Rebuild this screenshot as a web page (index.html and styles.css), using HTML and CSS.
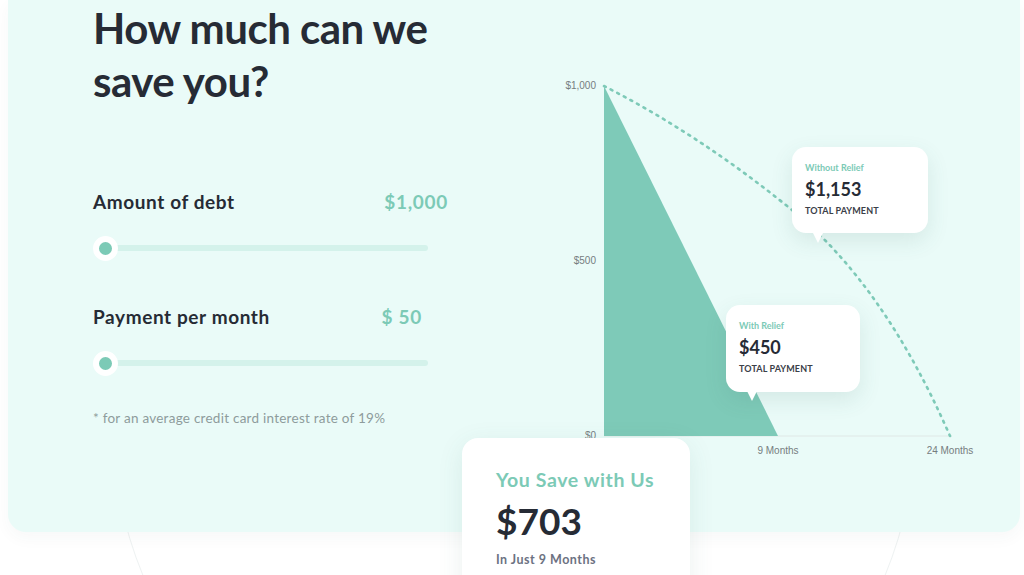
FILE: index.html
```html
<!DOCTYPE html>
<html lang="en">
<head>
  <meta charset="UTF-8">
  <meta name="viewport" content="width=device-width, initial-scale=1.0">
  <title>Savings Calculator</title>
  <link rel="stylesheet" href="styles.css">
</head>
<body>
  <div class="ring"></div>

  <section class="panel">
    <!-- Calculator -->
    <div class="calc">
      <h1>How much can we<br>save you?</h1>

      <div class="field first">
        <div class="field-row">
          <span class="field-label">Amount of debt</span>
          <span class="field-value">$1,000</span>
        </div>
        <div class="slider">
          <span class="knob"></span>
          <span class="track"></span>
        </div>
      </div>

      <div class="field">
        <div class="field-row">
          <span class="field-label">Payment per month</span>
          <span class="field-value short">$ 50</span>
        </div>
        <div class="slider">
          <span class="knob"></span>
          <span class="track"></span>
        </div>
      </div>

      <p class="note">* for an average credit card interest rate of 19%</p>
    </div>

    <!-- Chart -->
    <div class="chart">
      <svg width="440" height="392" viewBox="0 0 440 392">
        <line x1="56" y1="364" x2="404" y2="364" stroke="#dfe8e6" stroke-width="1"/>
        <polygon points="56,14 56,364 230,364" fill="#7ecab8"/>
        <path d="M56,14 Q152,63 244,138 T402,364" fill="none" stroke="#7ecab8" stroke-width="2.6" stroke-dasharray="2 5.5" stroke-linecap="round"/>
        <g class="axis-text">
          <text x="48" y="17" text-anchor="end">$1,000</text>
          <text x="48" y="192" text-anchor="end">$500</text>
          <text x="48" y="367" text-anchor="end">$0</text>
          <text x="230" y="382" text-anchor="middle">9 Months</text>
          <text x="402" y="382" text-anchor="middle">24 Months</text>
        </g>
      </svg>

      <div class="bubble without">
        <div class="bubble-label">Without Relief</div>
        <div class="bubble-amount">$1,153</div>
        <div class="bubble-sub">TOTAL PAYMENT</div>
      </div>

      <div class="bubble with">
        <div class="bubble-label">With Relief</div>
        <div class="bubble-amount">$450</div>
        <div class="bubble-sub">TOTAL PAYMENT</div>
      </div>
    </div>

    <div class="savings">
      <div class="savings-title">You Save with Us</div>
      <div class="savings-amount">$703</div>
      <div class="savings-sub">In Just 9 Months</div>
    </div>
  </section>
</body>
</html>
```

FILE: styles.css
```css
body {
  margin: 0;
  background-color: #fff;
  font-family: Lato, "Noto Sans", sans-serif;
  color: #262b35;
  overflow: hidden;
  position: relative;
  height: 575px;
}

/* big faint circle peeking out under the panel */
.ring {
  position: absolute;
  left: 112px;
  top: 20px;
  width: 802px;
  height: 802px;
  border: 1px solid #eef2f2;
  border-radius: 50%;
}

.panel {
  position: relative;
  display: flex;
  height: 532px;
  margin: 0 4px 0 8px;
  background-color: #eafbf8;
  border-radius: 0 0 18px 18px;
  box-shadow: 0 6px 16px rgba(40, 80, 70, 0.04);
}

.calc {
  width: 355px;
  padding: 2px 0 0 85px;
}

h1 {
  margin: 0;
  font-size: 42px;
  line-height: 53px;
  font-weight: 700;
  letter-spacing: -0.5px;
}

.field {
  width: 355px;
  margin-top: 44px;
}

.field.first {
  margin-top: 81px;
}

.field-row {
  display: flex;
  justify-content: space-between;
  align-items: center;
  height: 24px;
}

.field-label {
  font-size: 19px;
  font-weight: 700;
  letter-spacing: 0.6px;
}

.field-value {
  font-size: 19px;
  font-weight: 700;
  letter-spacing: 0.7px;
  color: #7ccab6;
}

.field-value.short {
  margin-right: 26px;
}

.slider {
  display: flex;
  align-items: center;
  width: 335px;
  height: 24px;
  margin-top: 23px;
}

.knob {
  flex: none;
  width: 13px;
  height: 13px;
  border: 6px solid #fff;
  border-radius: 50%;
  background-color: #7ccab6;
  position: relative;
  z-index: 1;
}

.track {
  flex: 1;
  height: 6px;
  margin-left: -6px;
  border-radius: 3px;
  background-color: #d4f2eb;
}

.note {
  margin: 34px 0 0;
  font-size: 13.5px;
  line-height: 18px;
  letter-spacing: 0.25px;
  color: #8e9c9c;
}

.chart {
  position: relative;
  margin: 72px 0 0 100px;
  width: 440px;
  height: 392px;
}

.chart svg {
  display: block;
}

.axis-text text {
  font-family: "Liberation Sans", Arial, sans-serif;
  font-size: 10px;
  fill: #767d80;
}

.bubble {
  position: absolute;
  box-sizing: border-box;
  width: 136px;
  height: 86px;
  padding: 14px 13px;
  background-color: #fff;
  border-radius: 14px;
  box-shadow: 0 8px 22px rgba(60, 110, 100, 0.12);
}

/* little tail under the bubble */
.bubble::after {
  content: '';
  position: absolute;
  top: 84px;
  left: 20px;
  border-left: 6px solid transparent;
  border-right: 6px solid transparent;
  border-top: 12px solid #fff;
}

.bubble.without {
  left: 244px;
  top: 75px;
}

.bubble.with {
  left: 178px;
  top: 233px;
  width: 134px;
  height: 87px;
}

.bubble-label {
  font-size: 9px;
  line-height: 13px;
  color: #7ccab6;
  font-weight: 700;
}

.bubble-amount {
  margin-top: 4px;
  font-size: 18px;
  line-height: 22px;
  font-weight: 700;
}

.bubble-sub {
  margin-top: 5px;
  font-size: 9px;
  line-height: 12px;
  font-weight: 700;
  letter-spacing: 0.1px;
  color: #3b4048;
}

.savings {
  position: absolute;
  left: 454px;
  top: 438px;
  box-sizing: border-box;
  width: 228px;
  height: 170px;
  padding: 30px 0 0 34px;
  background-color: #fff;
  border-radius: 16px;
  box-shadow: 0 6px 26px rgba(60, 110, 100, 0.1);
}

.savings-title {
  font-size: 19.5px;
  line-height: 24px;
  font-weight: 700;
  letter-spacing: 0.6px;
  color: #7ccab6;
}

.savings-amount {
  margin-top: 6px;
  font-size: 37px;
  line-height: 46px;
  font-weight: 700;
}

.savings-sub {
  margin-top: 8px;
  font-size: 12.5px;
  line-height: 16px;
  font-weight: 700;
  letter-spacing: 0.5px;
  color: #6c7282;
}
```
